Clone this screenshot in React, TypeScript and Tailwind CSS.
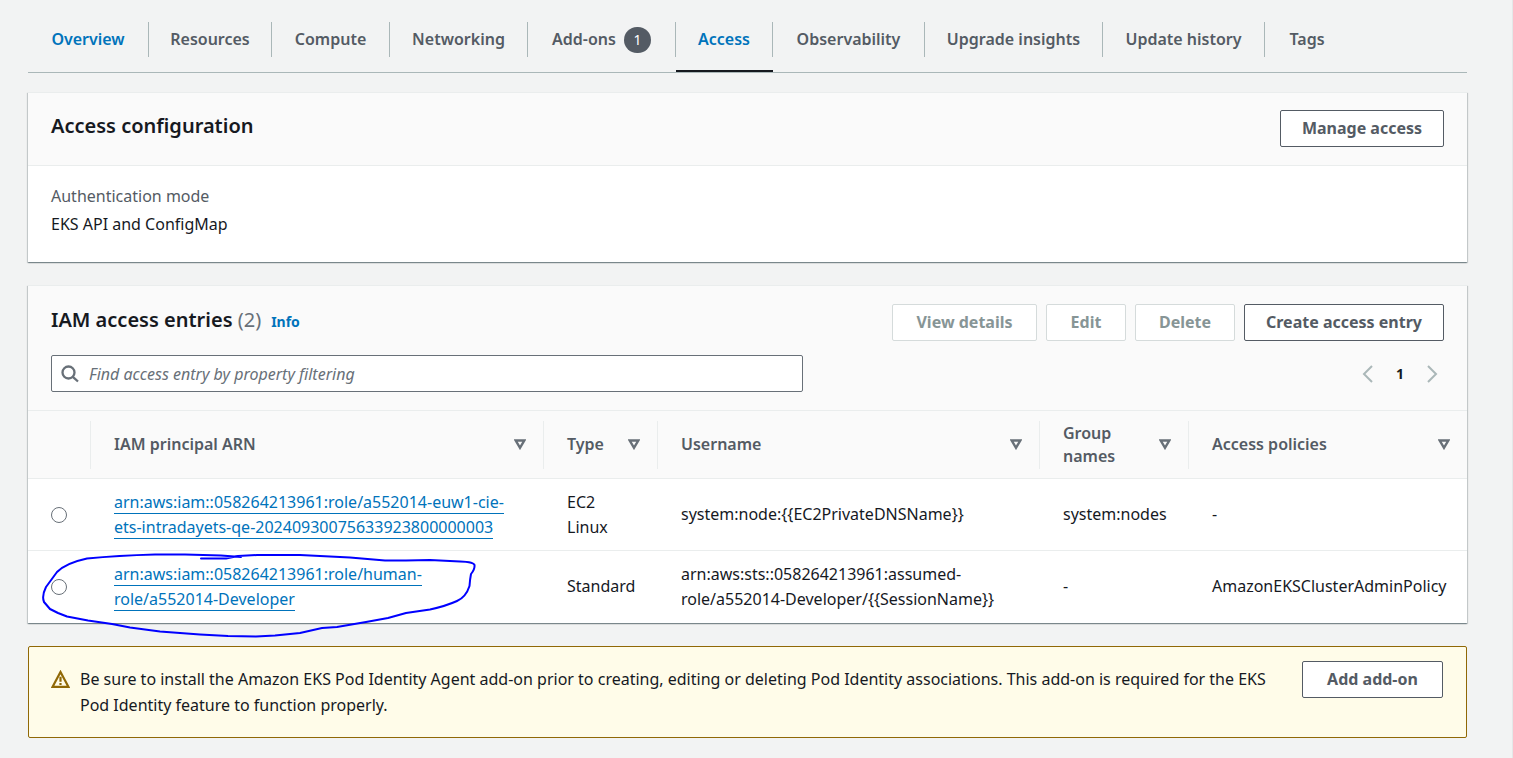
import type { ReactNode } from "react";

type Tab = { label: string; width: string; tone?: "link" | "active"; badge?: string };

const tabs: Tab[] = [
  { label: "Overview", width: "w-[121px]", tone: "link" },
  { label: "Resources", width: "w-[123px]" },
  { label: "Compute", width: "w-[118px]" },
  { label: "Networking", width: "w-[138px]" },
  { label: "Add-ons", width: "w-[148px]", badge: "1" },
  { label: "Access", width: "w-[97px]", tone: "active" },
  { label: "Observability", width: "w-[152px]" },
  { label: "Upgrade insights", width: "w-[178px]" },
  { label: "Update history", width: "w-[162px]" },
  { label: "Tags", width: "w-[84px]" },
];

function TabBar() {
  return (
    <nav className="flex h-[73px] items-stretch border-b border-[#aab7b8]">
      {tabs.map((tab, i) => (
        <div
          key={tab.label}
          className={`flex flex-col ${tab.width} ${tab.tone === "active" ? "border-b-2 border-[#16191f]" : ""}`}
        >
          <a
            href="#"
            className={`mt-[22px] flex h-[35px] items-center justify-center gap-2 whitespace-nowrap font-semibold ${
              i < tabs.length - 1 ? "border-r border-[#aab7b8]" : ""
            } ${tab.tone ? "text-[#0073bb]" : "text-[#545b64]"}`}
          >
            {tab.label}
            {tab.badge && (
              <span className="flex h-[26px] w-[27px] items-center justify-center rounded-full bg-[#545b64] text-sm font-normal text-white">
                {tab.badge}
              </span>
            )}
          </a>
        </div>
      ))}
    </nav>
  );
}

function Button({ children, width, disabled }: { children: ReactNode; width: string; disabled?: boolean }) {
  return (
    <button
      type="button"
      disabled={disabled}
      className={`h-[37px] shrink-0 whitespace-nowrap rounded-[2px] border bg-white text-center font-bold ${width} ${
        disabled ? "border-[#d5dbdb] text-[#879596]" : "border-[#545b64] text-[#545b64]"
      }`}
    >
      {children}
    </button>
  );
}

function Card({ children }: { children: ReactNode }) {
  return (
    <section className="relative border-t border-[#eaeded] bg-white shadow-[0_1px_1px_0_rgba(0,28,36,0.3),1px_1px_1px_0_rgba(0,28,36,0.15),-1px_1px_1px_0_rgba(0,28,36,0.15)]">
      {children}
    </section>
  );
}

function SortIcon() {
  return (
    <svg viewBox="0 0 12 11" className="h-[11px] w-3 shrink-0" aria-hidden="true">
      <path d="M1.7 1.5h8.6L6 8.8z" fill="none" stroke="#687078" strokeWidth="2.400" />
    </svg>
  );
}

function HeaderCell({ children, last }: { children: ReactNode; last?: boolean }) {
  return (
    <th className="p-0 text-left font-semibold text-[#545b64]">
      <div
        className={`flex h-12 items-center justify-between pl-[23px] pr-[17px] leading-[23px] ${
          last ? "" : "border-r border-[#eaeded]"
        }`}
      >
        <span>{children}</span>
        <SortIcon />
      </div>
    </th>
  );
}

function ArnLink({ children }: { children: ReactNode }) {
  return (
    <a href="#" className="border-b border-[#0073bb] text-[#0073bb]">
      {children}
    </a>
  );
}

const rows = [
  {
    id: "node",
    arn: (
      <>
        arn:aws:iam::058264213961:role/a552014-euw1-cie-
        <br />
        ets-intradayets-qe-20240930075633923800000003
      </>
    ),
    type: (
      <>
        EC2
        <br />
        Linux
      </>
    ),
    user: "system:node:{{EC2PrivateDNSName}}",
    groups: "system:nodes",
    policies: "-",
  },
  {
    id: "developer",
    arn: (
      <>
        arn:aws:iam::058264213961:role/human-
        <br />
        role/a552014-Developer
      </>
    ),
    type: "Standard",
    user: (
      <>
        arn:aws:sts::058264213961:assumed-
        <br />
        {"role/a552014-Developer/{{SessionName}}"}
      </>
    ),
    groups: "-",
    policies: "AmazonEKSClusterAdminPolicy",
  },
];

function EntriesTable() {
  return (
    <table className="w-full table-fixed border-collapse">
      <colgroup>
        <col className="w-[63px]" />
        <col />
        <col className="w-[114px]" />
        <col className="w-[382px]" />
        <col className="w-[149px]" />
        <col className="w-[278px]" />
      </colgroup>
      <thead>
        <tr className="h-[68px] border-y border-[#eaeded] bg-[#fafafa]">
          <th className="p-0">
            <div className="h-12 border-r border-[#eaeded]" />
          </th>
          <HeaderCell>IAM principal ARN</HeaderCell>
          <HeaderCell>Type</HeaderCell>
          <HeaderCell>Username</HeaderCell>
          <HeaderCell>Group names</HeaderCell>
          <HeaderCell last>Access policies</HeaderCell>
        </tr>
      </thead>
      <tbody>
        {rows.map((row) => (
          <tr key={row.id} className="h-[72px] whitespace-nowrap border-b border-[#eaeded] leading-[25px] last:border-b-0">
            <td className="p-0 pl-[23px]">
              <input
                type="radio"
                name="entry"
                aria-label={`Select ${row.id}`}
                className="block size-4 appearance-none rounded-full border border-[#687078] bg-white checked:border-[5px] checked:border-[#0073bb]"
              />
            </td>
            <td className="p-0 pl-[23px]">
              <ArnLink>{row.arn}</ArnLink>
            </td>
            <td className="p-0 pl-[23px]">{row.type}</td>
            <td className="p-0 pl-[23px]">{row.user}</td>
            <td className="p-0 pl-[23px]">{row.groups}</td>
            <td className="p-0 pl-[23px]">{row.policies}</td>
          </tr>
        ))}
      </tbody>
    </table>
  );
}

function InkCircle() {
  return (
    <svg
      viewBox="40 550 440 90"
      className="pointer-events-none absolute bottom-[-17px] left-3 h-[90px] w-[440px]"
      fill="none"
      stroke="#0000ff"
      strokeWidth="2"
      strokeLinecap="round"
      strokeLinejoin="round"
      aria-hidden="true"
    >
      <path d="M201 558.500L226 558.500L238 556L257 555L300 555L350 557.500L385 560.500L406 560.500L430 560L460 561.500Q474 562 474.500 565Q475 569 471 574Q470 579 469.500 586Q466 597 457 601Q446 606 430 609.500L406 613L388 618L366 622L337 627L322 628L300 633L275 635.500L256 636.500L228 636L200 634.500L160 631.500L130 627.500L112 624L88 620.500L67 616.500L58 613L50 609L44 602Q41.500 596 46 587L57 572Q66 563 87 558.500Q118 555.500 155 554.500L185 554.500L221 555.500L241 557" />
    </svg>
  );
}

export default function App() {
  return (
    <div className="min-h-screen border-r border-[#e4e8e8] bg-[#f2f3f3] pb-5 pl-7 pr-[45px] font-['Noto_Sans','Open_Sans',sans-serif] text-[16px] leading-[25px] text-[#16191f]">
      <TabBar />
      <main className="mt-[19px] flex flex-col gap-[23px]">
        <Card>
          <div className="flex h-[73px] items-start justify-between border-b border-[#eaeded] bg-[#fafafa] px-[23px] pt-[17px]">
            <h2 className="text-xl leading-8 font-semibold">Access configuration</h2>
            <Button width="w-[164px]">Manage access</Button>
          </div>
          <dl className="h-[96px] px-[23px] pt-[18px]">
            <dt className="text-[#545b64]">Authentication mode</dt>
            <dd className="mt-[3px]">EKS API and ConfigMap</dd>
          </dl>
        </Card>

        <Card>
          <div className="flex h-[124px] flex-col gap-[14px] bg-[#fafafa] px-[23px] pt-[18px]">
            <div className="flex items-start justify-between">
              <div className="flex items-baseline">
                <h2 className="text-xl leading-8 font-semibold">
                  IAM access entries <span className="font-normal text-[#687078]">(2)</span>
                </h2>
                <a href="#" className="ml-[10px] text-sm font-bold text-[#0073bb]">
                  Info
                </a>
              </div>
              <div className="flex gap-[9px]">
                <Button width="w-[145px]" disabled>
                  View details
                </Button>
                <Button width="w-[80px]" disabled>
                  Edit
                </Button>
                <Button width="w-[100px]" disabled>
                  Delete
                </Button>
                <Button width="w-[200px]">Create access entry</Button>
              </div>
            </div>
            <div className="flex items-center justify-between">
              <label className="flex h-[37px] w-[54%] items-center gap-[10px] rounded-[2px] border border-[#687078] bg-white pl-[9px] text-[#687078]">
                <svg viewBox="0 0 18 18" className="size-[18px] shrink-0" fill="none" stroke="#687078" strokeWidth="2.300" aria-hidden="true">
                  <circle cx="7.500" cy="7.500" r="6" />
                  <path d="M11.800 11.800L17 16.500" />
                </svg>
                <input
                  type="text"
                  aria-label="Find access entry"
                  placeholder="Find access entry by property filtering"
                  className="h-full min-w-0 flex-1 bg-transparent italic outline-none placeholder:text-[#687078]"
                />
              </label>
              <div className="flex items-center pr-[6px] font-bold">
                <button type="button" aria-label="Previous page" disabled>
                  <svg viewBox="0 0 12 18" className="h-[18px] w-3" fill="none" stroke="#aab7b8" strokeWidth="2" aria-hidden="true">
                    <path d="M10 1L2 9l8 8" />
                  </svg>
                </button>
                <button type="button" className="w-[52px] text-center text-sm">
                  1
                </button>
                <button type="button" aria-label="Next page" disabled>
                  <svg viewBox="0 0 12 18" className="h-[18px] w-3" fill="none" stroke="#aab7b8" strokeWidth="2" aria-hidden="true">
                    <path d="M2 1l8 8-8 8" />
                  </svg>
                </button>
              </div>
            </div>
          </div>
          <EntriesTable />
          <InkCircle />
        </Card>

        <section className="flex h-[92px] items-start rounded-[2px] border border-[#906806] bg-[#fffce9] pl-[22px] pr-[23px] pt-[14px]">
          <svg viewBox="0 0 19 18" className="mt-[9px] h-[18px] w-[19px] shrink-0" aria-hidden="true">
            <path d="M9.500 2L17.400 16.800H1.600z" fill="none" stroke="#906806" strokeWidth="2.200" />
            <path d="M9.500 6.800v5M9.500 13v2" stroke="#906806" strokeWidth="2.200" />
          </svg>
          <p className="ml-[10px] mr-auto mt-[5px] max-w-[1190px] leading-[26px]">
            Be sure to install the Amazon EKS Pod Identity Agent add-on prior to creating, editing or deleting Pod Identity
            associations. This add-on is required for the EKS Pod Identity feature to function properly.
          </p>
          <Button width="w-[141px]">Add add-on</Button>
        </section>
      </main>
    </div>
  );
}
